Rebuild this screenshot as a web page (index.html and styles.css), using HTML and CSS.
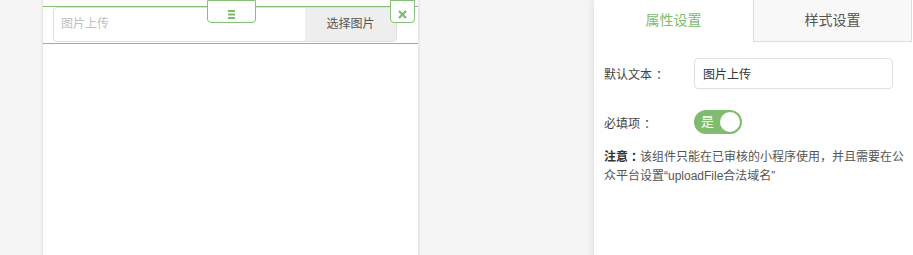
FILE: index.html
```html
<!DOCTYPE html>
<html lang="zh">
<head>
    <meta charset="UTF-8">
    <meta name="viewport" content="width=device-width, initial-scale=1.0">
    <title>图片上传</title>
    <link rel="stylesheet" href="styles.css">
</head>
<body>
    <div class="phone">
        <div class="widget active">
            <span class="widget-handle">
                <svg width="8" height="9" viewBox="0 0 8 9"><rect x="0" y="0" width="7" height="2"/><rect x="0" y="3.5" width="7" height="2"/><rect x="0" y="7" width="7" height="2"/></svg>
            </span>
            <span class="widget-close">
                <svg width="9" height="9" viewBox="0 0 9 9"><path d="M1 1 L8 8 M8 1 L1 8"/></svg>
            </span>
            <div class="upload">
                <div class="upload-text">图片上传</div>
                <div class="upload-btn">选择图片</div>
            </div>
        </div>
    </div>

    <div class="settings">
        <div class="tabs">
            <div class="tab active">属性设置</div>
            <div class="tab">样式设置</div>
        </div>
        <div class="form">
            <div class="form-row">
                <label>默认文本<span class="colon">：</span></label>
                <input class="text-input" type="text" value="图片上传">
            </div>
            <div class="form-row">
                <label>必填项<span class="colon">：</span></label>
                <div class="switch on"><span class="switch-label">是</span><span class="switch-knob"></span></div>
            </div>
            <p class="note"><b>注意<span class="colon-inline">：</span></b>该组件只能在已审核的小程序使用，并且需要在公众平台设置“uploadFile合法域名”</p>
        </div>
    </div>
</body>
</html>
```

FILE: styles.css
```css
body {
    font-family: "Liberation Sans", "Noto Sans CJK SC", sans-serif;
    margin: 0;
    padding: 0;
    height: 255px;
    overflow: hidden;
    background-color: #f5f5f5;
    color: #333;
    display: flex;
    align-items: flex-start;
}
.colon {
    padding-left: 4px;
}
.colon-inline {
    padding-left: 3px;
    margin-right: -3px;
}
.phone {
    margin-left: 43px;
    width: 375px;
    height: 300px;
    background-color: #fff;
    box-shadow: 0 0 3px rgba(0, 0, 0, 0.18);
}
.widget {
    position: relative;
    margin-top: 6px;
    padding: 0 21px 1px 10px;
    border-top: 1px solid #86c076;
    border-bottom: 1px solid #86c076;
}
.widget-handle,
.widget-close {
    position: absolute;
    top: -7px;
    display: flex;
    justify-content: center;
    align-items: center;
    padding-top: 6px;
    box-sizing: border-box;
    height: 23px;
    background-color: #fff;
    border: 1px solid #86c076;
    border-radius: 0 0 4px 4px;
    z-index: 2;
}
.widget-handle {
    left: 164px;
    width: 49px;
}
.widget-handle svg {
    fill: #7fbb6c;
}
.widget-close {
    left: 347px;
    width: 25px;
}
.widget-close svg {
    stroke: #7fbb6c;
    stroke-width: 2.2;
}
.upload {
    display: flex;
    height: 35px;
    border: 1px solid #dcdfe6;
    border-radius: 4px;
    box-sizing: border-box;
    overflow: hidden;
    font-size: 12px;
}
.upload-text {
    flex: 1;
    padding-left: 7px;
    line-height: 33px;
    color: #c0c0c0;
}
.upload-btn {
    width: 91px;
    line-height: 33px;
    text-align: center;
    background-color: #eee;
    color: #555;
}
.settings {
    margin-left: auto;
    width: 319px;
    height: 300px;
    background-color: #fff;
    box-shadow: 0 0 8px rgba(0, 0, 0, 0.12);
}
.tabs {
    display: flex;
}
.tab {
    width: 159px;
    height: 42px;
    line-height: 41px;
    text-align: center;
    font-size: 14px;
    color: #555;
    background-color: #f8f8f8;
    border: 1px solid #ddd;
    border-top: none;
    box-sizing: border-box;
}
.tab.active {
    background-color: #fff;
    color: #7fbb6c;
    border: none;
}
.form {
    padding: 16px 10px 0;
}
.form-row {
    display: flex;
    align-items: center;
    margin-bottom: 21px;
}
.form-row label {
    width: 90px;
    font-size: 12px;
    color: #444;
}
.text-input {
    width: 199px;
    height: 31px;
    box-sizing: border-box;
    padding: 0 8px;
    border: 1px solid #dcdfe6;
    border-radius: 4px;
    font-family: inherit;
    font-size: 12px;
    color: #333;
    outline: none;
}
.switch {
    position: relative;
    width: 48px;
    height: 24px;
    border-radius: 12px;
    background-color: #80bc6e;
}
.switch-label {
    position: absolute;
    left: 7px;
    top: 0;
    line-height: 24px;
    font-size: 13px;
    color: #fff;
}
.switch-knob {
    position: absolute;
    right: 2px;
    top: 2px;
    width: 20px;
    height: 20px;
    border-radius: 50%;
    background-color: #fff;
}
.note {
    margin: -7px -4px 0 0;
    font-size: 12px;
    line-height: 19px;
    color: #555;
}
.note b {
    color: #333;
}
```
